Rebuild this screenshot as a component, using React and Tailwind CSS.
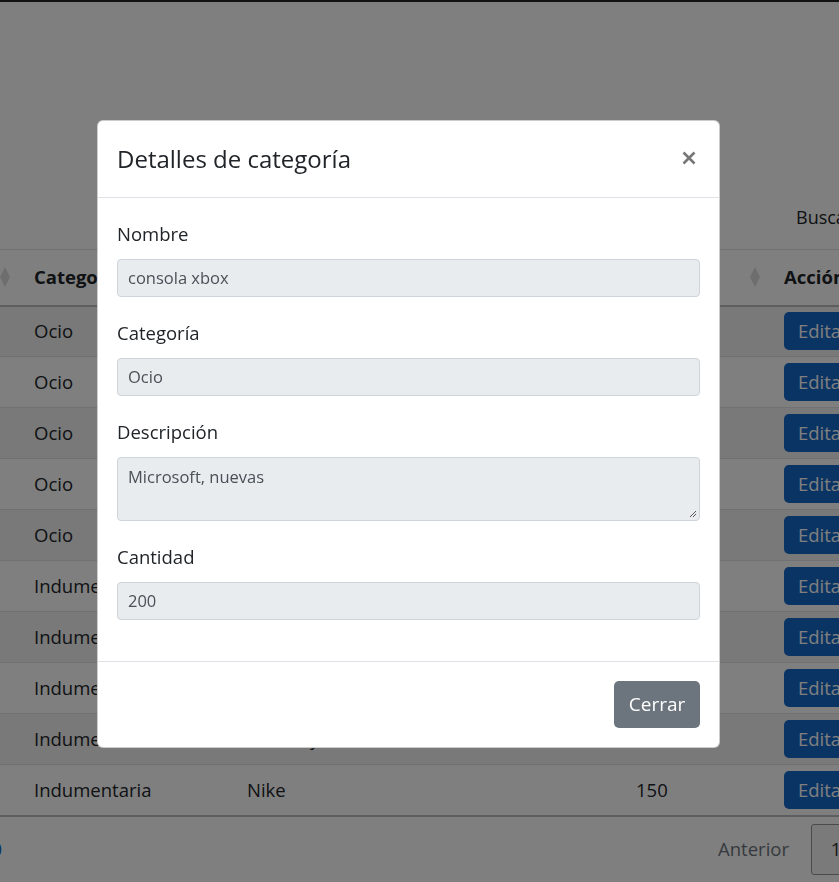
import React from 'react';

const rows = [
  { cat: 'Ocio', desc: 'Consola xbox', qty: '200' },
  { cat: 'Ocio', desc: 'Play Station 5', qty: '120' },
  { cat: 'Ocio', desc: 'Nintendo Switch', qty: '80' },
  { cat: 'Ocio', desc: 'Juegos de mesa', qty: '45' },
  { cat: 'Ocio', desc: 'Bicicletas', qty: '30' },
  { cat: 'Indumentaria', desc: 'Remeras', qty: '300' },
  { cat: 'Indumentaria', desc: 'Pantalones', qty: '210' },
  { cat: 'Indumentaria', desc: 'Camperas', qty: '95' },
  { cat: 'Indumentaria', desc: 'Adidas y Puma', qty: '180' },
  { cat: 'Indumentaria', desc: 'Nike', qty: '150' },
];

const SortIcon = () => (
  <svg width="10" height="20" viewBox="0 0 10 20" className="shrink-0">
    <path d="M5 0 L10 10 L5 20 L0 10 Z" fill="#dcdcdc" />
  </svg>
);

const Field = ({ label, value, area }) => (
  <div className="mb-[24px]">
    <label className="block text-[18.5px] leading-[24px] text-[#212529] mb-[13px]">{label}</label>
    {area ? (
      <div className="relative h-[64px] bg-[#e9ecef] border border-[#ced4da] rounded-[4px] px-[10px] pt-[7px] text-[16.5px] leading-[24px] text-[#495057]">
        {value}
        <svg width="8" height="8" viewBox="0 0 8 8" className="absolute right-[2px] bottom-[2px]">
          <path d="M7 1 L1 7 M7 4 L4 7" stroke="#555" strokeWidth="1" />
        </svg>
      </div>
    ) : (
      <div className="h-[38px] bg-[#e9ecef] border border-[#ced4da] rounded-[4px] px-[10px] flex items-center text-[16.5px] text-[#495057]">
        {value}
      </div>
    )}
  </div>
);

export default function App() {
  return (
    <div className="relative w-full h-[882px] overflow-hidden bg-white font-['Open_Sans',sans-serif] text-[#212529]">
      <div className="h-[2px] bg-[#212529]" />

      <div className="-ml-[150px] w-[1100px]">
        <div className="h-[247px] pl-[946px] pt-[203px]">
          <div className="text-[18px] leading-[24px] whitespace-nowrap">Buscar:</div>
        </div>

        <table className="border-collapse table-fixed text-[18.5px]">
          <colgroup>
            <col className="w-[172px]" />
            <col className="w-[213px]" />
            <col className="w-[389px]" />
            <col className="w-[148px]" />
            <col className="w-[178px]" />
          </colgroup>
          <thead>
            <tr className="border-t border-[#dee2e6] border-b-2 border-b-[#b8bcc0]">
              {['Id', 'Categoría', 'Descripción', 'Cantidad', 'Acción'].map((h, i) => (
                <th key={h} className="h-[56px] px-[12px] text-left font-bold">
                  <div className="flex items-center justify-between">
                    <span>{h}</span>
                    {i < 4 && <SortIcon />}
                  </div>
                </th>
              ))}
            </tr>
          </thead>
          <tbody>
            {rows.map((r, i) => (
              <tr key={i} className={`border-b border-[#dee2e6] ${i % 2 === 0 ? 'bg-[#f2f2f2]' : 'bg-white'}`}>
                <td className="h-[51px] px-[12px]">{i + 1}</td>
                <td className="px-[12px]">{r.cat}</td>
                <td className="px-[12px]">{r.desc}</td>
                <td className="px-[12px]">{r.qty}</td>
                <td className="px-[12px]">
                  <button className="h-[38px] px-[14px] rounded-[5px] bg-[#1468c8] text-white text-[18.5px]">Editar</button>
                </td>
              </tr>
            ))}
          </tbody>
        </table>
        <div className="border-t-2 border-[#b8bcc0] -mt-[1px]" />

        <div className="flex items-center justify-between h-[64px]">
          <div className="w-[152px] text-right text-[#1468c8] text-[18.5px] whitespace-nowrap overflow-hidden">Mostrando 1 a 10</div>
          <div className="flex items-center mr-[45px]">
            <span className="text-[#6c757d] text-[18.5px] mr-[22px]">Anterior</span>
            <span className="h-[51px] w-[50px] border border-[#979797] rounded-l-[3px] bg-[#f4f4f4] flex items-center justify-center text-[18.5px] text-[#333]">1</span>
            <span className="h-[51px] w-[44px] border border-[#dee2e6] flex items-center justify-center text-[18.5px]">2</span>
          </div>
        </div>
      </div>

      <div className="fixed inset-0 bg-black/50 pl-[97px] pt-[120px]">
        <div className="w-[623px] bg-white rounded-[6px] border border-black/20">
          <div className="h-[77px] px-[19px] flex items-center justify-between border-b border-[#dee2e6]">
            <h5 className="text-[24px] font-medium text-[#212529]">Detalles de categoría</h5>
            <svg width="14" height="14" viewBox="0 0 14 14" className="mr-[4px] -mt-[2px]">
              <path d="M1.5 1.5 L12.5 12.5 M12.5 1.5 L1.5 12.5" stroke="#777" strokeWidth="2.6" />
            </svg>
          </div>
          <div className="px-[19px] pt-[24px] pb-[17px] border-b border-[#dee2e6]">
            <Field label="Nombre" value="consola xbox" />
            <Field label="Categoría" value="Ocio" />
            <Field label="Descripción" value="Microsoft, nuevas" area />
            <Field label="Cantidad" value="200" />
          </div>
          <div className="h-[85px] px-[19px] flex items-center justify-end">
            <button className="w-[86px] h-[47px] rounded-[5px] bg-[#6c757d] text-white text-[19px]">Cerrar</button>
          </div>
        </div>
      </div>
    </div>
  );
}
